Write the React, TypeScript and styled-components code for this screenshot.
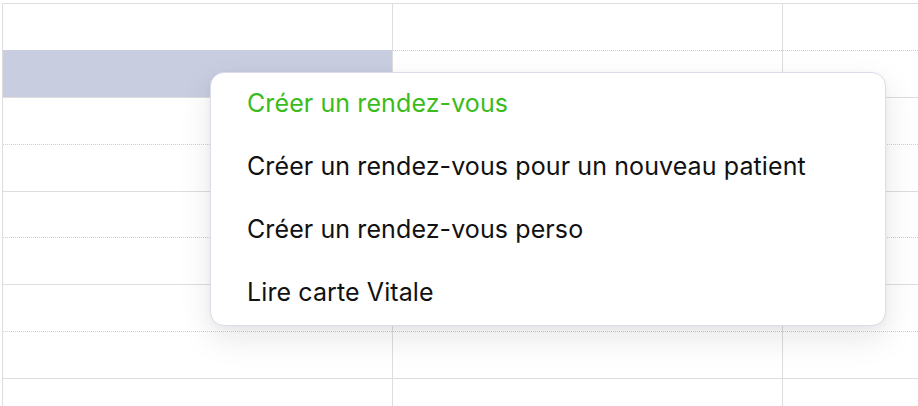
import React from "react";
import styled, { createGlobalStyle } from "styled-components";

const Global = createGlobalStyle`
  html, body { margin: 0; padding: 0; background: #ffffff; }
  body { font-family: Inter, "Noto Sans", sans-serif; overflow: hidden; }
`;

const Page = styled.div`
  position: relative;
  width: 918px;
  height: 406px;
  overflow: hidden;
  background: #ffffff;
`;

const Board = styled.div`
  display: flex;
  padding: 3px 0 0 2px;
`;

const Column = styled.div`
  box-sizing: border-box;
  flex: 0 0 390px;
  display: flex;
  flex-direction: column;
  border-left: 1px solid #dddddd;
`;

const Cell = styled.div<{ $dotted?: boolean; $selected?: boolean }>`
  box-sizing: border-box;
  height: 46.875px;
  border-top: 1px ${(p) => (p.$dotted ? "dotted #cfcfcf" : "solid #dddddd")};
  background: ${(p) => (p.$selected ? "#c8cde0" : "transparent")};
`;

const Menu = styled.ul`
  position: absolute;
  left: 210px;
  top: 72px;
  width: 676px;
  box-sizing: border-box;
  margin: 0;
  padding: 0;
  list-style: none;
  background: #ffffff;
  border: 1px solid #dcdcea;
  border-radius: 14px;
  box-shadow: 0 12px 32px rgba(20, 20, 40, 0.1), 0 2px 6px rgba(20, 20, 40, 0.04);
`;

const Item = styled.li<{ $accent?: boolean }>`
  box-sizing: border-box;
  display: flex;
  align-items: center;
  height: 63px;
  padding: 0 0 3px 36px;
  font-size: 25px;
  letter-spacing: 0.1px;
  color: ${(p) => (p.$accent ? "#3bbb1c" : "#111111")};
  cursor: pointer;
`;

const ROWS = 9;
const COLS = 3;

const items = [
  { label: "Créer un rendez-vous", accent: true },
  { label: "Créer un rendez-vous pour un nouveau patient" },
  { label: "Créer un rendez-vous perso" },
  { label: "Lire carte Vitale" },
];

export default function App() {
  return (
    <Page>
      <Global />
      <Board>
        {Array.from({ length: COLS }).map((_, c) => (
          <Column key={c}>
            {Array.from({ length: ROWS }).map((_, r) => (
              <Cell key={r} $dotted={r % 2 === 1} $selected={c === 0 && r === 1} />
            ))}
          </Column>
        ))}
      </Board>
      <Menu>
        {items.map((it) => (
          <Item key={it.label} $accent={it.accent}>
            {it.label}
          </Item>
        ))}
      </Menu>
    </Page>
  );
}
